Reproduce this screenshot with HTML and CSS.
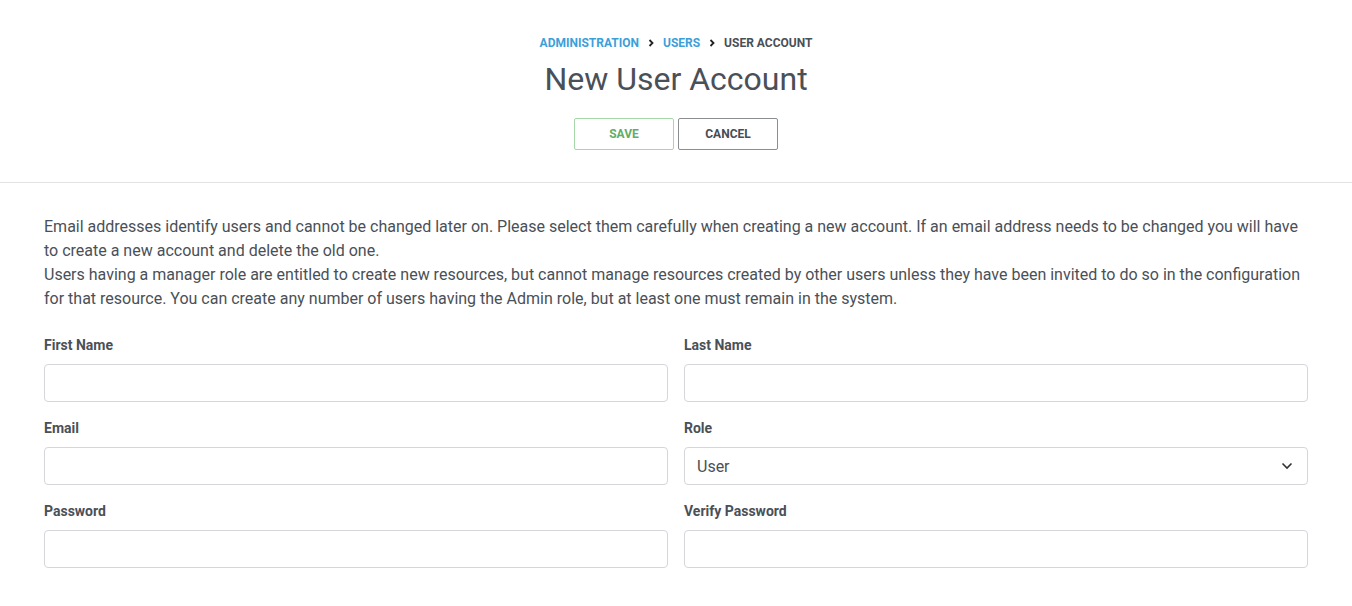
FILE: index.html
```html
<!DOCTYPE html>
<html>
<head>
<meta charset="utf-8">
<link rel="stylesheet" href="styles.css">
</head>
<body>
<header class="page-header">
  <nav class="crumbs">
    <a class="crumb link">Administration</a>
    <svg class="chev" width="8" height="8" viewBox="0 0 8 8"><path d="M2.5 1 L5.5 4 L2.5 7" fill="none" stroke="#222" stroke-width="1.8"/></svg>
    <a class="crumb link">Users</a>
    <svg class="chev" width="8" height="8" viewBox="0 0 8 8"><path d="M2.5 1 L5.5 4 L2.5 7" fill="none" stroke="#222" stroke-width="1.8"/></svg>
    <span class="crumb current">User Account</span>
  </nav>
  <h1 class="title">New User Account</h1>
  <div class="actions">
    <button class="btn btn-save">SAVE</button>
    <button class="btn btn-cancel">CANCEL</button>
  </div>
</header>
<main class="content">
  <p class="intro">Email addresses identify users and cannot be changed later on. Please select them carefully when creating a new account. If an email address needs to be changed you will have to create a new account and delete the old one.<br>Users having a manager role are entitled to create new resources, but cannot manage resources created by other users unless they have been invited to do so in the configuration for that resource. You can create any number of users having the Admin role, but at least one must remain in the system.</p>
  <form class="form">
    <div class="field">
      <label class="label">First Name</label>
      <input class="input" type="text">
    </div>
    <div class="field">
      <label class="label">Last Name</label>
      <input class="input" type="text">
    </div>
    <div class="field">
      <label class="label">Email</label>
      <input class="input" type="text">
    </div>
    <div class="field">
      <label class="label">Role</label>
      <div class="select">
        <span class="select-value">User</span>
        <svg width="12" height="8" viewBox="0 0 12 8"><path d="M1.5 1.5 L6 6 L10.5 1.5" fill="none" stroke="#333" stroke-width="1.6"/></svg>
      </div>
    </div>
    <div class="field">
      <label class="label">Password</label>
      <input class="input" type="password">
    </div>
    <div class="field">
      <label class="label">Verify Password</label>
      <input class="input" type="password">
    </div>
  </form>
</main>
</body>
</html>
```
FILE: styles.css
```css
* { box-sizing: border-box; }
body {
  margin: 0;
  background: #fff;
  font-family: Roboto, "Liberation Sans", sans-serif;
  color: #4a5057;
}
.page-header {
  display: flex;
  flex-direction: column;
  align-items: center;
  padding-top: 35px;
  padding-bottom: 32px;
  border-bottom: 1px solid #e2e2e2;
}
.crumbs {
  display: flex;
  align-items: center;
  gap: 8px;
  font-size: 12px;
  font-weight: 700;
  text-transform: uppercase;
  line-height: 16px;
}
.crumb.link { color: #3c9fd9; }
.crumb.current { color: #4a4f55; }
.title {
  margin: 8px 0 0;
  font-size: 32px;
  font-weight: 400;
  line-height: 40px;
  color: #4a5058;
}
.actions {
  display: flex;
  gap: 4px;
  margin-top: 19px;
}
.btn {
  width: 100px;
  height: 32px;
  background: #fff;
  border-radius: 2px;
  font-family: Roboto, "Liberation Sans", sans-serif;
  font-size: 12px;
  font-weight: 700;
  padding: 0;
}
.btn-save { color: #5fae65; border: 1px solid #a5d7a9; }
.btn-cancel { color: #474d54; border: 1px solid #8a8d91; }
.content {
  padding: 32px 44px 0;
}
.intro {
  margin: 0;
  font-size: 16px;
  line-height: 24px;
  color: #4a5057;
}
.form {
  margin-top: 24px;
  display: grid;
  grid-template-columns: 1fr 1fr;
  column-gap: 16px;
  row-gap: 16px;
}
.field { display: flex; flex-direction: column; }
.label {
  font-size: 14px;
  font-weight: 700;
  line-height: 20px;
  color: #4a5057;
  margin-bottom: 9px;
}
.input, .select {
  height: 38px;
  border: 1px solid #d4d6d9;
  border-radius: 4px;
  background: #fff;
  font-family: Roboto, "Liberation Sans", sans-serif;
  font-size: 16px;
}
.select {
  display: flex;
  align-items: center;
  justify-content: space-between;
  padding: 0 14px 0 12px;
  color: #4a5057;
}
```
